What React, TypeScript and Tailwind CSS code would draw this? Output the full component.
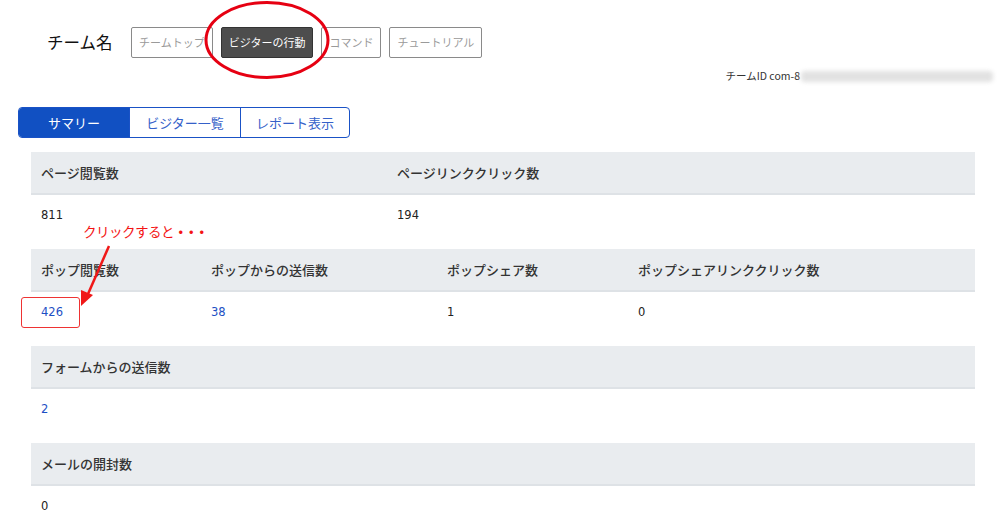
import React from "react";

const jp = { fontFamily: '"Noto Sans CJK JP", "Noto Sans", sans-serif' };
const num = { fontFamily: '"DejaVu Sans", "Noto Sans", sans-serif' };

function Header({ cols }: { cols: { label: string; w?: string }[] }) {
  return (
    <div className="flex h-[43px] items-center bg-[#e9ecef] border-b-2 border-[#dee2e6]">
      {cols.map((c, i) => (
        <div key={i} className={`${c.w ?? "flex-1"} pl-[10px] text-[13px] font-medium text-[#333]`} style={jp}>
          {c.label}
        </div>
      ))}
    </div>
  );
}

function Values({ cols }: { cols: { v: string; w?: string; blue?: boolean }[] }) {
  return (
    <div className="flex h-[54px] items-start pt-[15px]">
      {cols.map((c, i) => (
        <div
          key={i}
          className={`${c.w ?? "flex-1"} pl-[10px] text-[11.5px] leading-none ${c.blue ? "text-[#1c4fc4]" : "text-[#222]"}`}
          style={num}
        >
          {c.v}
        </div>
      ))}
    </div>
  );
}

export default function App() {
  return (
    <div className="relative w-[1000px] h-[525px] overflow-hidden bg-white" style={jp}>
      {/* top bar */}
      <div className="flex items-center pt-[27px] pl-[47px]">
        <div className="text-[16.5px] text-[#111] w-[84px]" style={jp}>チーム名</div>
        <div className="flex gap-2 text-[11px]">
          <button className="h-[31px] px-[7px] border border-[#8a8a8a] rounded-[2px] text-[#9a9a9a] bg-white">チームトップ</button>
          <button className="h-[31px] px-[7px] border border-[#333] rounded-[2px] text-white bg-[#4d4d4d]">ビジターの行動</button>
          <button className="h-[31px] px-[7px] border border-[#8a8a8a] rounded-[2px] text-[#9a9a9a] bg-white">コマンド</button>
          <button className="h-[31px] px-[7px] border border-[#8a8a8a] rounded-[2px] text-[#9a9a9a] bg-white">チュートリアル</button>
        </div>
      </div>

      <div className="flex items-center justify-end pr-[7px] mt-[11px] h-[14px]">
        <span className="text-[10.5px] text-[#333]" style={jp}>チームID com-8</span>
        <span className="ml-[1px] w-[192px] h-[11px] bg-[#e2e2e2] rounded-sm blur-[2px]"></span>
      </div>

      {/* tabs */}
      <div className="ml-[18px] mt-[24px] flex w-[332px] h-[31px] border border-[#1a52c6] rounded-[4px] overflow-hidden text-[13px]">
        <div className="w-[110px] flex items-center justify-center bg-[#1150c2] text-white">サマリー</div>
        <div className="w-[111px] flex items-center justify-center border-l border-[#1a52c6] text-[#3561c9]">ビジター一覧</div>
        <div className="flex-1 flex items-center justify-center border-l border-[#1a52c6] text-[#3561c9]">レポート表示</div>
      </div>

      {/* table */}
      <div className="ml-[31px] w-[944px] mt-[14px]">
        <div>
          <Header cols={[{ label: "ページ閲覧数", w: "w-[356px]" }, { label: "ページリンククリック数" }]} />
          <Values cols={[{ v: "811", w: "w-[356px]" }, { v: "194" }]} />
        </div>
        <div>
          <Header
            cols={[
              { label: "ポップ閲覧数", w: "w-[170px]" },
              { label: "ポップからの送信数", w: "w-[236px]" },
              { label: "ポップシェア数", w: "w-[191px]" },
              { label: "ポップシェアリンククリック数" },
            ]}
          />
          <Values
            cols={[
              { v: "426", w: "w-[170px]", blue: true },
              { v: "38", w: "w-[236px]", blue: true },
              { v: "1", w: "w-[191px]" },
              { v: "0" },
            ]}
          />
        </div>
        <div>
          <Header cols={[{ label: "フォームからの送信数" }]} />
          <Values cols={[{ v: "2", blue: true }]} />
        </div>
        <div>
          <Header cols={[{ label: "メールの開封数" }]} />
          <Values cols={[{ v: "0" }]} />
        </div>
      </div>

      {/* annotations */}
      <svg className="absolute left-0 top-0 pointer-events-none" width="1000" height="525">
        <ellipse cx="267" cy="40" rx="61" ry="37.5" fill="none" stroke="#e60012" strokeWidth="3" />
        <line x1="109" y1="246" x2="88" y2="294" stroke="#f01818" strokeWidth="2.5" />
        <polygon points="81,306 81,290 93,295" fill="#f01818" />
      </svg>
      <div className="absolute left-[21px] top-[297px] w-[59px] h-[31px] border-[1.5px] border-[#ee3333] rounded-[3px]"></div>
      <div className="absolute left-[83px] top-[225px] text-[13.5px] text-[#f41414] leading-none tracking-[-0.5px] flex items-center" style={jp}>
        <span>クリックすると</span>
        <span className="font-bold tracking-[-3px]">・・・</span>
      </div>
    </div>
  );
}
